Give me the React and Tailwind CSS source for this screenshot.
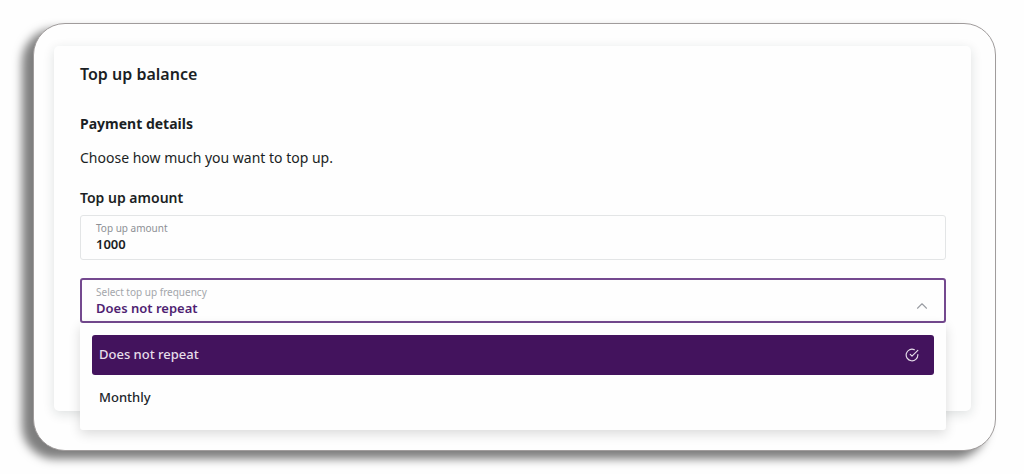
import React, { useState } from 'react';
import { FiCheckCircle, FiChevronUp, FiChevronDown } from 'react-icons/fi';

const frequencies = ['Does not repeat', 'Monthly'];

const FrequencySelect = () => {
    const [open, setOpen] = useState(true);
    const [selected, setSelected] = useState('Does not repeat');

    const handleSelect = (value) => {
        setSelected(value);
        setOpen(false);
    };

    return (
        <div className="relative mt-[18px]">
            <div className="relative h-[45px] rounded-[3px] border-2 border-[#74498f] px-[14px] pt-1">
                <label htmlFor="frequency" className="block text-[10px] leading-4 text-[#a3a6ab]">Select top up frequency</label>
                <select
                    id="frequency"
                    value={selected}
                    onChange={(e) => handleSelect(e.target.value)}
                    className="block w-full appearance-none bg-transparent text-[13px] leading-4 font-semibold text-[#4f1f72] outline-none"
                >
                    {frequencies.map((item) => <option key={item}>{item}</option>)}
                </select>
                <button type="button" aria-label="Toggle options" onClick={() => setOpen(!open)} className="absolute right-[13px] bottom-1.5 text-[#9a9da3]">
                    {open ? <FiChevronUp className="h-[18px] w-[18px]" strokeWidth={1.5} /> : <FiChevronDown className="h-[18px] w-[18px]" strokeWidth={1.5} />}
                </button>
            </div>

            {/* Options menu */}
            {open && (
                <div role="listbox" aria-label="Top up frequency" className="absolute inset-x-0 top-full flex flex-col gap-[3px] rounded-b-[3px] bg-[#fefefe] p-3 shadow-[0_4px_12px_rgba(0,0,0,0.14)]">
                    {frequencies.map((item) => (
                        <button
                            key={item}
                            type="button"
                            role="option"
                            aria-selected={item === selected}
                            onClick={() => handleSelect(item)}
                            className={`flex h-10 w-full items-center justify-between rounded-[3px] pr-[15px] pl-[7px] text-[13px] font-medium ${item === selected ? 'bg-[#43135d] text-[#e6deea]' : 'text-[#22262b]'}`}
                        >
                            <span>{item}</span>
                            {item === selected && <FiCheckCircle className="h-[14px] w-[14px]" />}
                        </button>
                    ))}
                </div>
            )}
        </div>
    );
};

const App = () => {
    return (
        <div className="bg-[#fefefe] pt-[23px] pr-7 pb-[23px] pl-[33px] font-['Noto_Sans',sans-serif] text-[#1b1f24]">
            <main className="rounded-[32px] border border-[#a09c9c] bg-[#fefefe] pt-[22px] pr-6 pb-[39px] pl-5 shadow-[-10px_7px_10px_1px_rgba(0,0,0,0.5)]">
                <form className="rounded-[5px] bg-[#fefefe] pt-4 pr-[25px] pb-[88px] pl-[26px] shadow-[0_3px_12px_rgba(20,40,40,0.14)]">
                    <h1 className="text-[16px] leading-6 font-semibold">Top up balance</h1>

                    {/* Payment details */}
                    <h2 className="mt-[26px] text-[14px] leading-6 font-bold">Payment details</h2>
                    <p className="mt-[10px] text-[14px] leading-6">Choose how much you want to top up.</p>
                    <h3 className="mt-4 text-[14px] leading-6 font-semibold">Top up amount</h3>

                    <div className="mt-[5px] h-[45px] rounded-[3px] border border-[#e3e5e6] px-[15px] pt-1">
                        <label htmlFor="amount" className="block text-[10px] leading-4 text-[#8d9095]">Top up amount</label>
                        <input id="amount" type="text" defaultValue="1000" className="block w-full bg-transparent text-[13px] leading-4 font-semibold outline-none" />
                    </div>
                    <FrequencySelect />
                </form>
            </main>
        </div>
    );
};

export default App;
